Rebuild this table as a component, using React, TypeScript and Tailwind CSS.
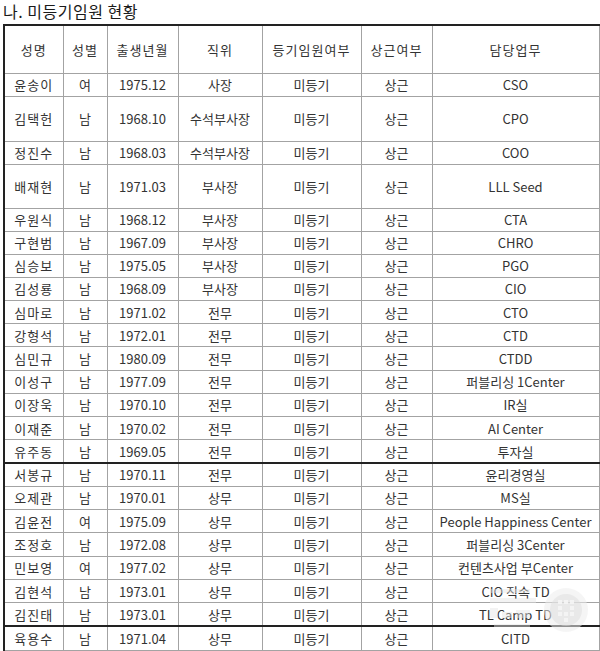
import React from 'react';

type Row = [string, string, string, string, string, string, string];

const rows: { d: Row; h: number; thick?: boolean }[] = [
  { d: ['윤송이', '여', '1975.12', '사장', '미등기', '상근', 'CSO'], h: 23 },
  { d: ['김택헌', '남', '1968.10', '수석부사장', '미등기', '상근', 'CPO'], h: 45 },
  { d: ['정진수', '남', '1968.03', '수석부사장', '미등기', '상근', 'COO'], h: 23 },
  { d: ['배재현', '남', '1971.03', '부사장', '미등기', '상근', 'LLL Seed'], h: 44 },
  { d: ['우원식', '남', '1968.12', '부사장', '미등기', '상근', 'CTA'], h: 23 },
  { d: ['구현범', '남', '1967.09', '부사장', '미등기', '상근', 'CHRO'], h: 23.2 },
  { d: ['심승보', '남', '1975.05', '부사장', '미등기', '상근', 'PGO'], h: 23.2 },
  { d: ['김성룡', '남', '1968.09', '부사장', '미등기', '상근', 'CIO'], h: 23.2 },
  { d: ['심마로', '남', '1971.02', '전무', '미등기', '상근', 'CTO'], h: 23.2 },
  { d: ['강형석', '남', '1972.01', '전무', '미등기', '상근', 'CTD'], h: 23.2 },
  { d: ['심민규', '남', '1980.09', '전무', '미등기', '상근', 'CTDD'], h: 23.2 },
  { d: ['이성구', '남', '1977.09', '전무', '미등기', '상근', '퍼블리싱 1Center'], h: 23.2 },
  { d: ['이장욱', '남', '1970.10', '전무', '미등기', '상근', 'IR실'], h: 23.2 },
  { d: ['이재준', '남', '1970.02', '전무', '미등기', '상근', 'AI Center'], h: 23.2 },
  { d: ['유주동', '남', '1969.05', '전무', '미등기', '상근', '투자실'], h: 23.2, thick: true },
  { d: ['서봉규', '남', '1970.11', '전무', '미등기', '상근', '윤리경영실'], h: 23.3 },
  { d: ['오제관', '남', '1970.01', '상무', '미등기', '상근', 'MS실'], h: 23.3 },
  { d: ['김윤전', '여', '1975.09', '상무', '미등기', '상근', 'People Happiness Center'], h: 23.3 },
  { d: ['조정호', '남', '1972.08', '상무', '미등기', '상근', '퍼블리싱 3Center'], h: 23.3 },
  { d: ['민보영', '여', '1977.02', '상무', '미등기', '상근', '컨텐츠사업 부Center'], h: 23.3 },
  { d: ['김현석', '남', '1973.01', '상무', '미등기', '상근', 'CIO 직속 TD'], h: 23.3 },
  { d: ['김진태', '남', '1973.01', '상무', '미등기', '상근', 'TL Camp TD'], h: 23.3, thick: true },
  { d: ['육용수', '남', '1971.04', '상무', '미등기', '상근', 'CITD'], h: 24.5 },
  { d: ['', '', '', '', '', '', ''], h: 23.3 },
];

const headers = ['성명', '성별', '출생년월', '직위', '등기임원여부', '상근여부', '담당업무'];
const widths = ['w-[59px]', 'w-[44px]', 'w-[71px]', 'w-[84px]', 'w-[99px]', 'w-[71px]', 'w-[167px]'];

// 우측 하단의 흐린 워터마크
function Watermark() {
  return (
    <svg className="absolute left-[490px] top-[586px] pointer-events-none" width="100" height="50" viewBox="0 0 100 50">
      <g fill="#e6e6e6" opacity="0.45">
        <rect x="0" y="3" width="40" height="4" />
        <rect x="0" y="12" width="46" height="5" />
        <rect x="0" y="22" width="8" height="10" />
        <rect x="12" y="26" width="10" height="6" />
        <rect x="26" y="24" width="14" height="8" />
        <rect x="4" y="38" width="36" height="3" />
      </g>
      <circle cx="76" cy="24" r="22" fill="#ececec" opacity="0.55" />
      <circle cx="76" cy="24" r="16" fill="#dedede" opacity="0.5" />
      <g fill="#f6f6f6" opacity="0.9">
        <rect x="68" y="14" width="4" height="4" />
        <rect x="74" y="14" width="4" height="4" />
        <rect x="80" y="14" width="4" height="4" />
        <rect x="68" y="20" width="4" height="4" />
        <rect x="80" y="20" width="4" height="4" />
        <rect x="68" y="26" width="4" height="4" />
        <rect x="74" y="26" width="4" height="4" />
        <rect x="80" y="26" width="4" height="4" />
        <rect x="74" y="32" width="4" height="4" />
      </g>
    </svg>
  );
}

export default function App() {
  return (
    <div className="relative w-[600px] bg-white text-[#333] font-['Noto_Sans_CJK_KR','Noto_Sans',sans-serif]">
      {/* 제목 */}
      <div className="h-[24px] pl-[3px] pt-[1px] text-[16px] leading-[21px] tracking-[0.5px] text-[#1a1a1a]">나. 미등기임원 현황</div>

      <table className="ml-[3px] w-[596px] table-fixed border-collapse border-t-2 border-l-2 border-t-[#222] border-l-[#222] text-[13px] leading-none">
        <thead>
          <tr className="h-[48px]">
            {headers.map((t, i) => (
              <th key={t} className={`${widths[i]} border border-[#a3a3a3] text-center font-normal tracking-[1px]`}>
                {t}
              </th>
            ))}
          </tr>
        </thead>
        <tbody>
          {rows.map((r, ri) => (
            <tr key={ri} style={{ height: r.h }}>
              {r.d.map((c, ci) => (
                <td
                  key={ci}
                  className={`border-x border-t border-[#a3a3a3] text-center whitespace-nowrap ${r.thick ? 'border-b-2 border-b-[#222]' : 'border-b'} ${ci === 0 ? 'tracking-[1px]' : ''}`}
                >
                  {c}
                </td>
              ))}
            </tr>
          ))}
        </tbody>
      </table>

      <Watermark />
    </div>
  );
}
